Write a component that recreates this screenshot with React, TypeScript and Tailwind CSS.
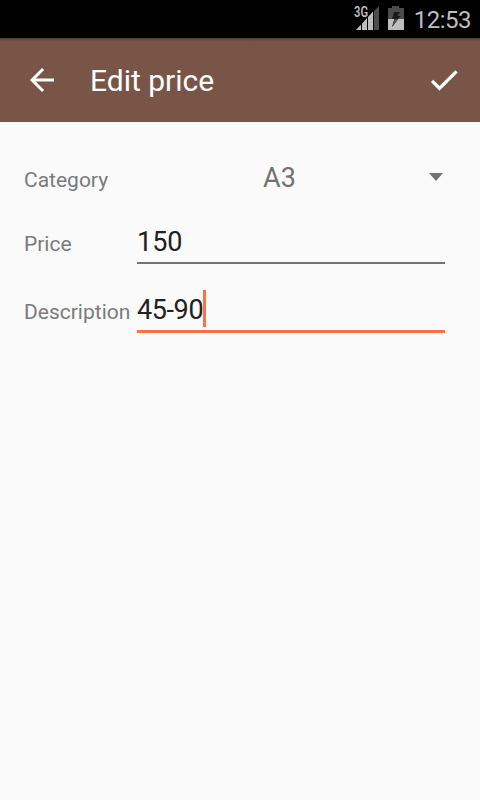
import type { ReactNode } from "react";

function StatusBar() {
  return (
    <div className="flex h-[38px] items-start justify-end bg-black pr-[9px] font-[Roboto,sans-serif] text-[#bebebe]">
      <svg className="mt-1 h-[28px] w-[28px]" viewBox="0 0 28 28" aria-hidden="true">
        <path d="M3 26 8 20.5V26Z" fill="#bebebe" />
        <path d="M9 19.5 14 14V26H9Z" fill="#bebebe" />
        <path d="M15 13 20 7.5V26H15Z" fill="#bebebe" />
        <path d="M21 7 26 2V26H21Z" fill="#4c4c4c" />
        <text x="1" y="13.2" fontSize="14.5" fontWeight="600" fill="#bebebe" stroke="#000" strokeWidth="1.5" paintOrder="stroke" textLength="14" lengthAdjust="spacingAndGlyphs">
          3G
        </text>
      </svg>
      <svg className="mt-1.5 ml-[7px] h-6 w-4" viewBox="0 0 16 24" aria-hidden="true">
        <path d="M0 2H4V0H11V2H16V13H0Z" fill="#4c4c4c" />
        <path d="M0 13H16V24H0Z" fill="#bebebe" />
        <path d="M6 6H12L9.5 10H12.5L4 21L6.5 13H4Z" fill="#191919" />
        <path d="M6.5 13H10.2L4 21Z" fill="#4c4c4c" />
      </svg>
      <span className="ml-2 mt-1 flex w-[59px] justify-end whitespace-nowrap text-2xl leading-8 tracking-[-0.5px]">12:53</span>
    </div>
  );
}

function Toolbar() {
  return (
    <header className="flex h-[84px] items-center bg-[#795548] bg-[linear-gradient(to_bottom,rgba(0,0,0,0.25),transparent_4px)] pl-6 pr-[18px] text-white">
      <button type="button" aria-label="Back">
        <svg className="size-9" viewBox="0 0 24 24" fill="currentColor">
          <path d="M20 11H7.83l5.59-5.59L12 4l-8 8 8 8 1.41-1.41L7.83 13H20v-2z" />
        </svg>
      </button>
      <h1 className="ml-[30px] pt-0.5 text-[30px] leading-9">Edit price</h1>
      <button type="button" aria-label="Save" className="ml-auto">
        <svg className="size-9" viewBox="0 0 24 24" fill="currentColor" stroke="currentColor" strokeWidth="0.3">
          <path d="M9 16.17 4.83 12l-1.42 1.41L9 19 21 7l-1.41-1.41z" />
        </svg>
      </button>
    </header>
  );
}

function Field({ label, children }: { label: string; children: ReactNode }) {
  return (
    <div className="flex items-start">
      <span className="w-[113px] shrink-0 pt-1 text-[21px] leading-7 text-[#7b7b7b]">{label}</span>
      {children}
    </div>
  );
}

export default function App() {
  return (
    <div className="h-[800px] w-[480px] overflow-hidden bg-[#fafafa] font-[Roboto,sans-serif]">
      <StatusBar />
      <Toolbar />
      <main className="pl-6 pr-[35px] pt-10">
        <Field label="Category">
          <div className="flex h-16 flex-1 items-start text-[27px] leading-8 text-[#737373]">
            <span className="w-[285px] text-center">A3</span>
            <svg className="ml-[7px] mt-[11px] h-2 w-[14px] shrink-0" viewBox="0 0 14 8" fill="#737373">
              <path d="M0 0H14L7 8Z" />
            </svg>
          </div>
        </Field>
        <Field label="Price">
          <div className="mb-1 h-[38px] flex-1 border-b-2 border-[#737373] text-[27px] leading-8 text-[#212121]">150</div>
        </Field>
        <div className="h-[26px]" />
        <Field label="Description">
          <div className="flex h-[39px] flex-1 border-b-[3px] border-[#ff7043] text-[27px] leading-8 text-[#212121]">
            <span className="tracking-[-0.4px]">45-90</span>
            <span className="-mt-1 h-[37px] w-[3px] bg-[#ff7043]" />
          </div>
        </Field>
      </main>
    </div>
  );
}
